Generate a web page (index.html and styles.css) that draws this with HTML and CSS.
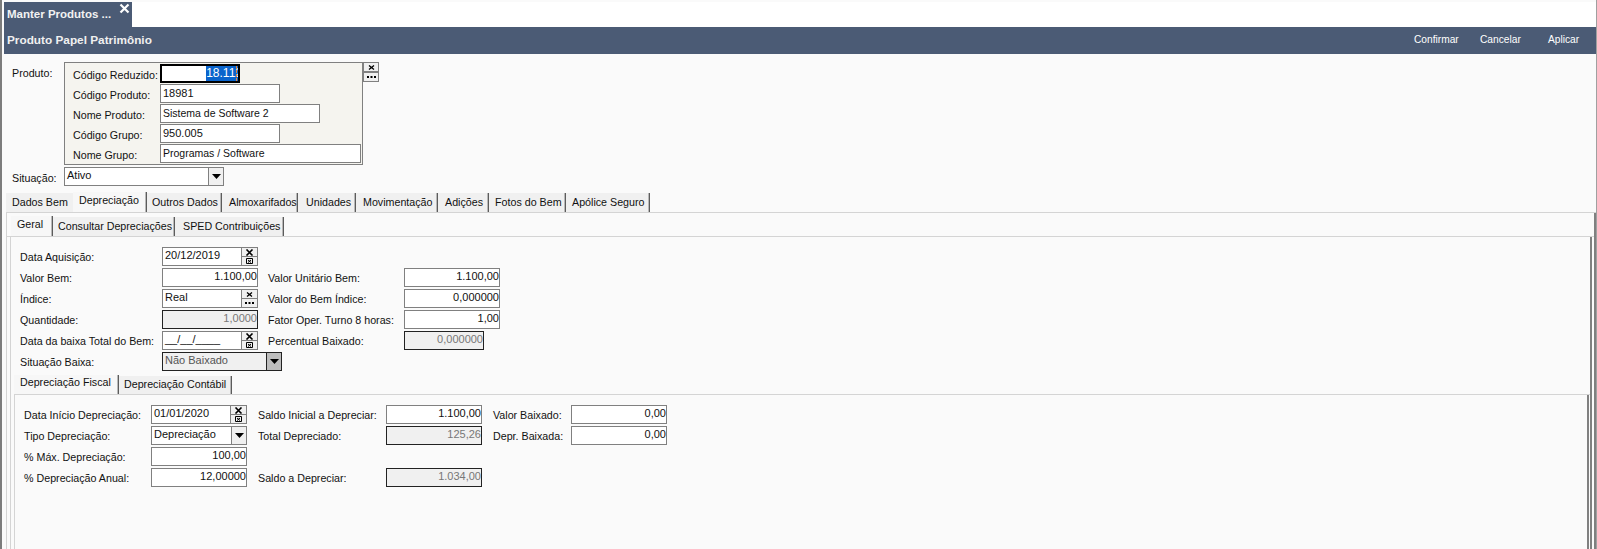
FILE: index.html
```html
<!DOCTYPE html>
<html lang="pt-BR">
<head>
<meta charset="utf-8">
<title>Manter Produtos</title>
<link rel="stylesheet" href="styles.css">
</head>
<body>
<svg class="defs" width="0" height="0" aria-hidden="true">
  <symbol id="ic-x" viewBox="0 0 9 7"><path d="M1.500 .5 7.500 6.500M7.500 .5 1.500 6.500" stroke="#000" stroke-width="1.600" fill="none"/></symbol>
  <symbol id="ic-xs" viewBox="0 0 7 5"><path d="M1 .5 6 4.500M6 .5 1 4.500" stroke="#000" stroke-width="1.300" fill="none"/></symbol>
  <symbol id="ic-cal" viewBox="0 0 7 6"><path d="M.5 .5h6v5h-6z" stroke="#000" fill="none"/><path d="M2 2 5 4.500M5 2 2 4.500" stroke="#000" fill="none"/></symbol>
  <symbol id="ic-dots" viewBox="0 0 9 2"><path d="M0 0h2v2H0zM3.500 0h2v2h-2zM7 0h2v2H7z"/></symbol>
  <symbol id="ic-arrow" viewBox="0 0 9 5"><path d="M0 0h9L4.500 5z"/></symbol>
</svg>
<div class="window">
  <div class="doc-tabs">
    <div class="doc-tab"><span>Manter Produtos ...</span>
      <svg class="doc-close" width="11" height="11" viewBox="0 0 11 11"><path d="M1.500 1.500 9.500 9.500M9.500 1.500 1.500 9.500" stroke="#fff" stroke-width="2.200" fill="none"/></svg>
    </div>
  </div>
  <header class="title-bar">
    <strong>Produto Papel Patrimônio</strong>
    <nav class="actions"><span class="a1">Confirmar</span><span class="a2">Cancelar</span><span class="a3">Aplicar</span></nav>
  </header>

  <section class="top-form">
    <div class="product-row">
      <span class="top-label">Produto:</span>
      <div class="product-box">
        <label>Código Reduzido:</label><div class="in focus w80"><mark>18.112</mark></div>
        <label>Código Produto:</label><div class="in w120">18981</div>
        <label>Nome Produto:</label><div class="in w160 txt">Sistema de Software 2</div>
        <label>Código Grupo:</label><div class="in w120">950.005</div>
        <label>Nome Grupo:</label><div class="in w201 txt">Programas / Software</div>
      </div>
      <div class="lookup-side">
        <button class="mini"><svg width="7" height="5"><use href="#ic-xs"/></svg></button>
        <button class="mini"><svg width="9" height="2"><use href="#ic-dots"/></svg></button>
      </div>
    </div>
    <div class="situacao-row">
      <span class="top-label">Situação:</span>
      <div class="in sel w160">Ativo<span class="arrow"><svg width="9" height="5"><use href="#ic-arrow"/></svg></span></div>
    </div>
  </section>

  <div class="tabs tabs-main">
    <span class="tab t1">Dados Bem</span>
    <span class="tab active t2">Depreciação</span>
    <span class="tab t3">Outros Dados</span>
    <span class="tab t4">Almoxarifados</span>
    <span class="tab t5">Unidades</span>
    <span class="tab t6">Movimentação</span>
    <span class="tab t7">Adições</span>
    <span class="tab t8">Fotos do Bem</span>
    <span class="tab t9">Apólice Seguro</span>
  </div>
  <div class="panel panel-main">
    <div class="tabs tabs-sub">
      <span class="tab active s1">Geral</span>
      <span class="tab s2">Consultar Depreciações</span>
      <span class="tab s3">SPED Contribuições</span>
    </div>
    <div class="panel panel-sub">
      <div class="grid grid-geral">
        <label>Data Aquisição:</label>
        <div class="combo"><div class="in grow">20/12/2019</div><div class="btns"><button class="mini"><svg width="9" height="7"><use href="#ic-x"/></svg></button><button class="mini"><svg width="7" height="6"><use href="#ic-cal"/></svg></button></div></div>
        <span></span><span></span>

        <label>Valor Bem:</label><div class="in right">1.100,00</div>
        <label class="next">Valor Unitário Bem:</label><div class="in right">1.100,00</div>

        <label>Índice:</label>
        <div class="combo"><div class="in grow">Real</div><div class="btns"><button class="mini"><svg width="7" height="5"><use href="#ic-xs"/></svg></button><button class="mini"><svg width="9" height="2"><use href="#ic-dots"/></svg></button></div></div>
        <label class="next">Valor do Bem Índice:</label><div class="in right">0,000000</div>

        <label>Quantidade:</label><div class="in right ro">1,0000</div>
        <label class="next">Fator Oper. Turno 8 horas:</label><div class="in right">1,00</div>

        <label>Data da baixa Total do Bem:</label>
        <div class="combo"><div class="in grow">__/__/____</div><div class="btns"><button class="mini"><svg width="9" height="7"><use href="#ic-x"/></svg></button><button class="mini"><svg width="7" height="6"><use href="#ic-cal"/></svg></button></div></div>
        <label class="next">Percentual Baixado:</label><div class="in right ro w80">0,000000</div>

        <label>Situação Baixa:</label>
        <div class="in sel ro dark w120">Não Baixado<span class="arrow arrow-ro"><svg width="9" height="5"><use href="#ic-arrow"/></svg></span></div>
      </div>

      <div class="tabs tabs-third">
        <span class="tab active d1">Depreciação Fiscal</span>
        <span class="tab d2">Depreciação Contábil</span>
      </div>
      <div class="panel panel-third">
        <div class="grid grid-fiscal">
          <label>Data Início Depreciação:</label>
          <div class="combo"><div class="in grow">01/01/2020</div><div class="btns"><button class="mini"><svg width="9" height="7"><use href="#ic-x"/></svg></button><button class="mini"><svg width="7" height="6"><use href="#ic-cal"/></svg></button></div></div>
          <label class="next">Saldo Inicial a Depreciar:</label><div class="in right">1.100,00</div>
          <label class="next">Valor Baixado:</label><div class="in right">0,00</div>

          <label>Tipo Depreciação:</label>
          <div class="in sel">Depreciação<span class="arrow"><svg width="9" height="5"><use href="#ic-arrow"/></svg></span></div>
          <label class="next">Total Depreciado:</label><div class="in right ro">125,26</div>
          <label class="next">Depr. Baixada:</label><div class="in right">0,00</div>

          <label>% Máx. Depreciação:</label><div class="in right">100,00</div>
          <span></span><span></span><span></span><span></span>

          <label>% Depreciação Anual:</label><div class="in right">12,00000</div>
          <label class="next">Saldo a Depreciar:</label><div class="in right ro">1.034,00</div>
        </div>
      </div>
    </div>
  </div>
</div>
</body>
</html>
```

FILE: styles.css
```css
* { box-sizing: border-box; }
html, body { margin: 0; height: 100%; overflow: hidden; }
body {
  background: #fafafa;
  font: 10.700px/1 "Liberation Sans", Arial, sans-serif;
  color: #111;
}
.defs { position: absolute; }
.window {
  height: 549px;
  border-left: 2px solid #7c7c7c;
  border-right: 1px solid #a0a0a0;
  padding: 2px 0 0 2px;
  overflow: hidden;
}
.doc-tabs { height: 25px; background: #fff; }
.doc-tab {
  width: 128px; height: 25px;
  background: #4b5b75;
  color: #f2f2f2;
  font-weight: bold;
  font-size: 11.500px;
  display: flex; align-items: center;
  padding-left: 3px;
  position: relative;
}
.doc-close { position: absolute; left: 115px; top: 1px; }
.title-bar {
  height: 27px;
  background: #4b5b75;
  color: #f0f0f0;
  display: flex; align-items: center; justify-content: space-between;
  padding-left: 3px;
}
.title-bar strong { font-size: 11.800px; }
.actions { display: flex; color: #fff; font-size: 10.200px; }
.a1 { width: 66px; }
.a2 { width: 68px; }
.a3 { width: 48px; }
.top-form { padding: 8px 0 0 8px; }
.product-row { display: flex; align-items: flex-start; }
.top-label { width: 52px; padding-top: 6px; flex: none; }
.product-box {
  width: 299px; height: 103px;
  background: #f5f4ef;
  border: 1px solid #808080;
  display: grid;
  grid-template-columns: 95px 1fr;
  grid-auto-rows: 19px;
  row-gap: 1px;
  padding: 1px 0 0 0;
  flex: none;
}
.product-box label { padding: 6px 0 0 8px; white-space: nowrap; }
.product-box .in { padding-top: 3px; }
.product-box .focus { padding: 0; }
.lookup-side { display: flex; flex-direction: column; }
.lookup-side .mini { flex: none; width: 16px; height: 10px; }
.situacao-row { display: flex; margin-top: 2px; height: 19px; }

.in {
  height: 19px;
  background: #fff;
  border: 1px solid #808080;
  padding: 2px 1px 0 2px;
  font-size: 11px;
  white-space: nowrap;
  overflow: hidden;
  position: relative;
}
.txt { font-size: 10.500px; }
.right { text-align: right; padding-right: 0; }
.ro { background: #f0f0f0; border-color: #222; color: #777; }
.dark { color: #555; }
.focus { border: 2px solid #000; display: flex; justify-content: flex-end; }
.focus mark {
  display: block; flex: none;
  background: #0a64cc; color: #fff;
  height: 15px; line-height: 15px;
  font-size: 12px;
  margin-right: -4px;
}
.focus::after { content: ""; position: absolute; right: 1px; top: 0; bottom: 0; border-right: 1px dashed #e8863a; }
.w80 { width: 80px; }
.w120 { width: 120px; }
.w160 { width: 160px; }
.w201 { width: 201px; }
.sel { padding-right: 17px; }
.arrow {
  position: absolute; right: 0; top: 0; bottom: 0; width: 15px;
  background: #f0f0f0;
  border-left: 1px solid #808080;
  display: flex; align-items: center; justify-content: center;
}
.arrow-ro { background: #bdbdbd; border-left-color: #222; }
.combo { display: flex; height: 19px; }
.combo .grow { flex: 1; min-width: 0; border-right: 0; }
.btns { width: 17px; display: flex; flex-direction: column; }
.mini {
  flex: 1; padding: 0; margin: 0;
  background: #f0f0f0;
  border: 1px solid #808080;
  display: flex; align-items: center; justify-content: center;
  overflow: hidden;
}
.btns .mini + .mini { margin-top: -1px; }
.mini svg { display: block; flex: none; }

.tabs { display: flex; }
.tab {
  display: block;
  white-space: nowrap;
  border-right: 1px solid #5c5c5c;
  box-shadow: inset -1px 0 #b8b8b8;
  background: #f0f0f0;
  padding-left: 6px;
  margin-top: 1px;
  flex: none;
}
.tab.active { background: #f7f7f7; margin-top: 0; }
.tabs-main { height: 21px; margin: 6px 0 0 2px; border-bottom: 1px solid #d4d4d4; }
.tabs-main .tab { height: 19px; padding-top: 4px; }
.tabs-main .active { padding-top: 3px; height: 20px; }
.tabs-main .t1 { border-right-color: #f0f0f0; box-shadow: none; }
.t1 { width: 67px; }
.t2 { width: 74px; }
.t3 { width: 75px; padding-left: 5px; }
.t4 { width: 76px; padding-left: 7px; }
.t5 { width: 58px; padding-left: 8px; }
.t6 { width: 82px; padding-left: 7px; }
.t7 { width: 51px; padding-left: 7px; }
.t8 { width: 77px; }
.t9 { width: 84px; }

.panel-main {
  margin-left: 2px; height: 340px;
  border-left: 1px solid #d4d4d4;
  border-right: 2px solid #808080;
}
.tabs-sub { height: 24px; padding: 3px 0 0 4px; border-bottom: 1px solid #d4d4d4; }
.tabs-sub .tab { height: 19px; padding-top: 4px; }
.tabs-sub .active { padding-top: 3px; height: 20px; }
.s1 { width: 42px; }
.s2 { width: 122px; padding-left: 5px; }
.s3 { width: 109px; padding-left: 8px; }

.panel-sub {
  margin: 0 2px 0 3px; height: 320px; padding-top: 10px;
  border-left: 1px solid #d4d4d4;
  border-right: 2px solid #808080;
}
.grid { display: grid; grid-auto-rows: 19px; row-gap: 2px; align-items: start; }
.grid label { padding-top: 5px; white-space: nowrap; }
.grid-geral { grid-template-columns: 142px 96px 146px 96px; padding-left: 9px; }
.grid-geral .next { padding-left: 10px; }
.grid-fiscal { grid-template-columns: 127px 96px 139px 96px 89px 96px; }
.grid-fiscal .next { padding-left: 11px; }

.tabs-third { height: 20px; margin: 4px 0 0 3px; border-bottom: 1px solid #d4d4d4; }
.tabs-third .tab { height: 18px; padding-top: 3px; }
.tabs-third .active { height: 19px; padding-top: 2px; }
.d1 { width: 105px; }
.d2 { width: 113px; padding-left: 5px; }
.panel-third {
  margin: 0 1px 0 3px; height: 200px; padding: 10px 0 0 9px;
  border-left: 1px solid #d4d4d4;
  border-right: 2px solid #808080;
}
```
